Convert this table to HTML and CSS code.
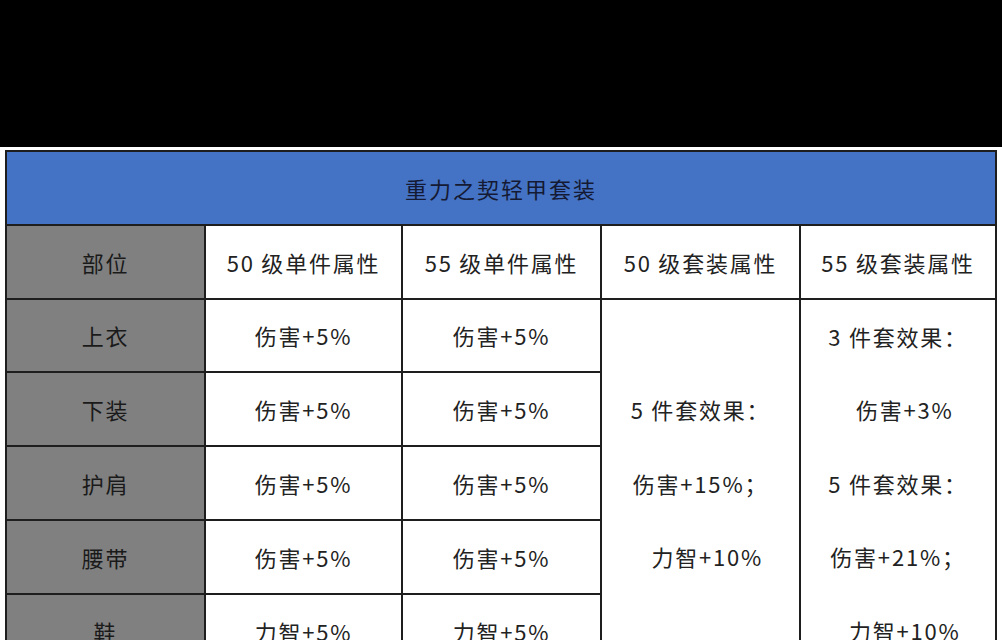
FILE: index.html
```html
<!DOCTYPE html>
<html lang="zh-CN">
<head>
<meta charset="utf-8">
<title>重力之契轻甲套装</title>
<link rel="stylesheet" href="styles.css">
</head>
<body>
<div class="topband"></div>
<div class="wrap">
<table class="suit">
  <colgroup>
    <col class="c1"><col class="c2"><col class="c3"><col class="c4"><col class="c5">
  </colgroup>
  <tr class="title-row"><td colspan="5" class="title">重力之契轻甲套装</td></tr>
  <tr class="row">
    <td class="part">部位</td>
    <td>50 级单件属性</td>
    <td>55 级单件属性</td>
    <td>50 级套装属性</td>
    <td>55 级套装属性</td>
  </tr>
  <tr class="row">
    <td class="part">上衣</td>
    <td>伤害+5%</td>
    <td>伤害+5%</td>
    <td rowspan="5" class="set"><div class="lines"><p>5 件套效果：</p><p>伤害+15%；</p><p>&nbsp;&nbsp;力智+10%</p></div></td>
    <td rowspan="5" class="set"><div class="lines"><p>3 件套效果：</p><p>&nbsp;&nbsp;伤害+3%</p><p>5 件套效果：</p><p>伤害+21%；</p><p>&nbsp;&nbsp;力智+10%</p></div></td>
  </tr>
  <tr class="row">
    <td class="part">下装</td>
    <td>伤害+5%</td>
    <td>伤害+5%</td>
  </tr>
  <tr class="row">
    <td class="part">护肩</td>
    <td>伤害+5%</td>
    <td>伤害+5%</td>
  </tr>
  <tr class="row">
    <td class="part">腰带</td>
    <td>伤害+5%</td>
    <td>伤害+5%</td>
  </tr>
  <tr class="row">
    <td class="part">鞋</td>
    <td>力智+5%</td>
    <td>力智+5%</td>
  </tr>
</table>
</div>
</body>
</html>
```
FILE: styles.css
```css
html, body {
  margin: 0;
  padding: 0;
  background: #ffffff;
  overflow: hidden;
}
body {
  width: 1002px;
  height: 640px;
  font-family: "Noto Sans CJK SC", "Noto Sans", sans-serif;
}
.topband {
  height: 147px;
  background: #000000;
}
.wrap {
  padding: 3px 0 0 5px;
}
.suit {
  border-collapse: collapse;
  table-layout: fixed;
  width: 990px;
  border: 2px solid #1e1e1e;
}
.c1 { width: 199px; }
.c2 { width: 197px; }
.c3 { width: 199px; }
.c4 { width: 199px; }
.c5 { width: 196px; }
.suit td {
  border: 2px solid #1e1e1e;
  text-align: center;
  vertical-align: middle;
  padding: 0;
  font-size: 22px;
  letter-spacing: 1.8px;
  color: #222222;
  background: #ffffff;
  white-space: nowrap;
}
.title-row { height: 74px; }
.row { height: 73.5px; }
.suit td.title {
  background: #4472c4;
  color: #141a33;
  font-size: 22px;
  letter-spacing: 2px;
}
.suit td.part {
  background: #808080;
  color: #1a1a1a;
}
.lines p {
  margin: 0;
  line-height: 73.5px;
}
```
